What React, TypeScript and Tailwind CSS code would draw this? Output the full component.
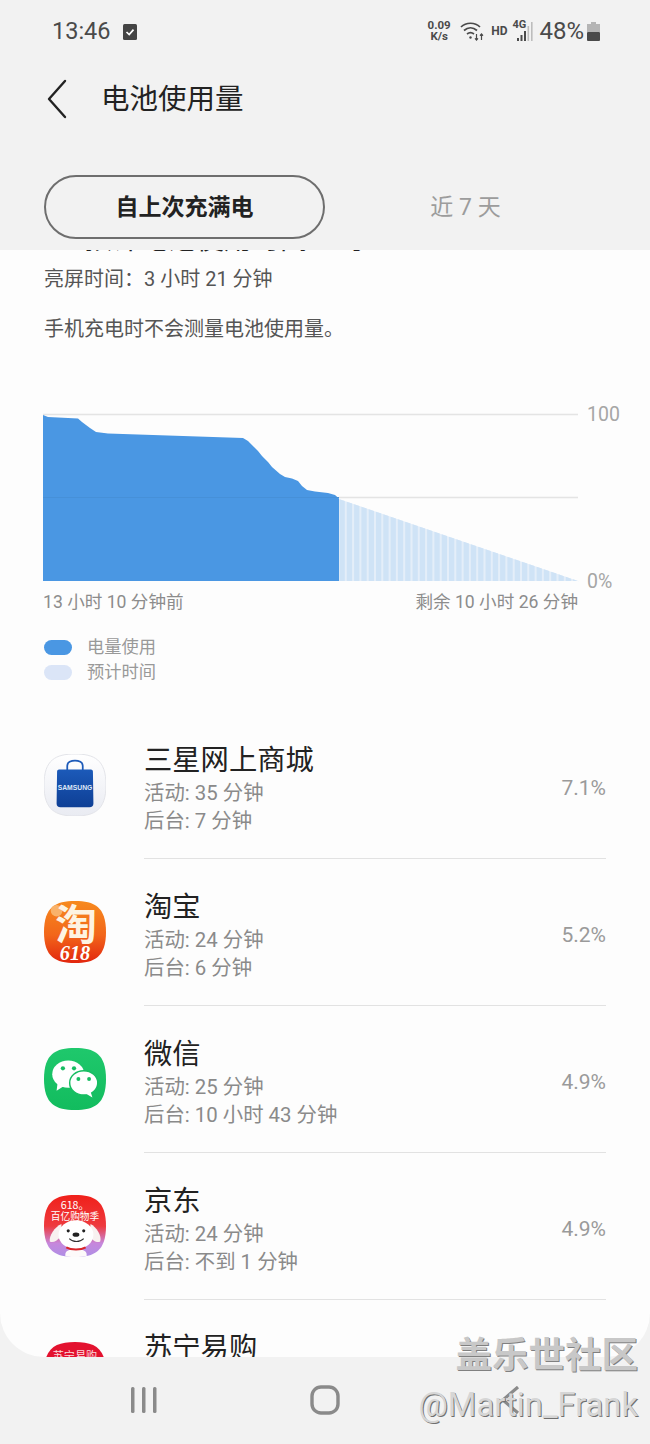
const font = 'font-["Roboto","Noto_Sans_CJK_SC",sans-serif]';
const squircle = 'M32 0C52 0 64 6 64 32 64 58 52 64 32 64 12 64 0 58 0 32 0 6 12 0 32 0Z';

const usedPoints = '43,581 43,415 48,417 78,418.5 82,422 90,428 96,432 108,433.5 243,438 248,441 254,447 258,451 262,456 268,462 272,467 280,474 285,477 292,478.5 298,481 302,486 307,490 315,491.5 328,493 335,495 339,498.5 339,581';

const apps = [
  { name: '三星网上商城', active: '活动: 35 分钟', bg: '后台: 7 分钟', pct: '7.1%', icon: 'samsung' },
  { name: '淘宝', active: '活动: 24 分钟', bg: '后台: 6 分钟', pct: '5.2%', icon: 'taobao' },
  { name: '微信', active: '活动: 25 分钟', bg: '后台: 10 小时 43 分钟', pct: '4.9%', icon: 'wechat' },
  { name: '京东', active: '活动: 24 分钟', bg: '后台: 不到 1 分钟', pct: '4.9%', icon: 'jd' },
  { name: '苏宁易购', active: '活动: 20 分钟', bg: '后台: 5 分钟', pct: '4.1%', icon: 'suning' },
];

function AppIcon({ kind }: { kind: string }) {
  return (
    <svg viewBox="0 0 64 64" className="h-[62px] w-[62px] shrink-0">
      <defs>
        <linearGradient id="sam" x1="0" y1="0" x2="0" y2="1"><stop offset="0" stopColor="#ffffff" /><stop offset="1" stopColor="#e9ebf2" /></linearGradient>
        <linearGradient id="bag" x1="0" y1="0" x2="0" y2="1"><stop offset="0" stopColor="#1c5ab9" /><stop offset="1" stopColor="#0e3f95" /></linearGradient>
        <linearGradient id="tao" x1="0" y1="0" x2="0" y2="1"><stop offset="0" stopColor="#f78a1e" /><stop offset="0.55" stopColor="#f2661a" /><stop offset="1" stopColor="#e2260e" /></linearGradient>
        <linearGradient id="wx" x1="0" y1="0" x2="0" y2="1"><stop offset="0" stopColor="#1fc86c" /><stop offset="1" stopColor="#12bc5e" /></linearGradient>
        <linearGradient id="jd" x1="0" y1="0" x2="0" y2="1"><stop offset="0" stopColor="#f0201a" /><stop offset="0.5" stopColor="#ee3a3e" /><stop offset="0.78" stopColor="#c687dc" /><stop offset="1" stopColor="#ae8fe6" /></linearGradient>
        <clipPath id={`clip-${kind}`}><path d={squircle} /></clipPath>
      </defs>
      {kind === 'samsung' && (
        <>
          <path d={squircle} fill="url(#sam)" stroke="#e2e3e8" strokeWidth="1" />
          <path d="M24 18V12C24 5 40 5 40 12V18" fill="none" stroke="#1c5ab9" strokeWidth="1.8" />
          <path d="M13.5 18C13.5 17 14.5 16 15.5 16H48.5C49.5 16 50.5 17 50.5 18L51 51C51 53.5 49.5 55 47 55H17C14.5 55 13 53.5 13 51Z" fill="url(#bag)" />
          <text x="32" y="37.5" textAnchor="middle" fontSize="7" fontWeight="700" fill="#dfe8f7" fontFamily="Liberation Sans, sans-serif">SAMSUNG</text>
        </>
      )}
      {kind === 'taobao' && (
        <>
          <path d={squircle} fill="url(#tao)" />
          <circle cx="13" cy="10" r="6" fill="#f9b26a" />
          <text x="33" y="40" textAnchor="middle" fontSize="43" fontWeight="700" fill="#fdf3e2" fontFamily="Noto Sans CJK SC, sans-serif">淘</text>
          <text x="32" y="61" textAnchor="middle" fontSize="21" fontWeight="700" fontStyle="italic" fill="#fff" fontFamily="Liberation Serif, serif">618</text>
        </>
      )}
      {kind === 'wechat' && (
        <>
          <path d={squircle} fill="url(#wx)" />
          <ellipse cx="25" cy="27" rx="16.5" ry="14" fill="#fff" />
          <path d="M14 36L13 44 21 39Z" fill="#fff" />
          <circle cx="19.5" cy="21" r="2.2" fill="#17bd62" />
          <circle cx="31" cy="21" r="2.2" fill="#17bd62" />
          <ellipse cx="41" cy="36" rx="14.5" ry="12.5" fill="#fff" stroke="#17bd62" strokeWidth="1.5" />
          <path d="M48 45L50 51 43 47Z" fill="#fff" />
          <circle cx="35.5" cy="32" r="2" fill="#17bd62" />
          <circle cx="46.5" cy="32" r="2" fill="#17bd62" />
        </>
      )}
      {kind === 'jd' && (
        <g clipPath="url(#clip-jd)">
          <rect width="64" height="64" fill="url(#jd)" />
          <text x="32" y="14" textAnchor="middle" fontSize="11" fill="#fff" fontFamily="Noto Sans CJK SC, sans-serif">618。</text>
          <text x="32" y="26" textAnchor="middle" fontSize="10" fill="#fff" fontFamily="Noto Sans CJK SC, sans-serif">百亿购物季</text>
          <path d="M18 30C11 33 5 42 6 48 9 50 14 47 18 42Z" fill="#f8f1f0" />
          <path d="M48 30C54 33 60 42 58 48 55 50 50 47 47 42Z" fill="#f8f1f0" />
          <ellipse cx="33" cy="41" rx="18" ry="15" fill="#fff" />
          <path d="M22 61C22 54 44 54 44 61V66H22Z" fill="#fdfafa" />
          <path d="M23 54C28 57 38 57 43 54" fill="none" stroke="#d8262a" strokeWidth="2" />
          <circle cx="25" cy="37" r="1.6" fill="#222" />
          <circle cx="41" cy="37" r="1.6" fill="#222" />
          <ellipse cx="33" cy="41" rx="3.5" ry="2.2" fill="#222" />
          <path d="M26 45C30 49 37 49 41 45" fill="none" stroke="#333" strokeWidth="1.2" />
        </g>
      )}
      {kind === 'suning' && (
        <>
          <path d={squircle} fill="#e3122f" />
          <text x="32" y="19" textAnchor="middle" fontSize="11.5" fill="#fbd9dd" fontFamily="Noto Sans CJK SC, sans-serif">苏宁易购</text>
        </>
      )}
    </svg>
  );
}

function BatteryChart() {
  // projected part: light bars under the line from (339,499) to (578,581)
  const bars = [];
  for (let i = 0; i < 33; i++) {
    const x = 339.5 + i * 7.3;
    const top = 499 + ((x - 339) / 239) * 82;
    bars.push(<path key={i} d={`M${x} 581V${top}L${x + 5.3} ${top + (5.3 / 239) * 82}V581Z`} fill="#cfe3f6" />);
  }
  return (
    <svg viewBox="0 404 650 185" className="block h-[185px] w-[650px]">
      <line x1="43" y1="414.5" x2="578" y2="414.5" stroke="#e4e4e4" strokeWidth="1.4" />
      <line x1="339" y1="497.5" x2="578" y2="497.5" stroke="#e4e4e4" strokeWidth="1.4" />
      <polygon points="339,499 578,581 339,581" fill="#e4eef9" />
      {bars}
      <polygon points={usedPoints} fill="#4a97e3" />
      <line x1="43" y1="497.5" x2="339" y2="497.5" stroke="#4690d8" strokeWidth="1" />
      <text x="587" y="421" fontSize="19.5" fill="#a6a6a6" fontFamily="Roboto, sans-serif">100</text>
      <text x="587" y="587.5" fontSize="19.5" fill="#a6a6a6" fontFamily="Roboto, sans-serif">0%</text>
    </svg>
  );
}

function StatusIcons() {
  return (
    <div className="flex items-center text-[#4a4a4a]">
      <div className="flex w-[24px] flex-col items-center text-[11.5px] font-bold leading-[11px]">
        <span>0.09</span>
        <span>K/s</span>
      </div>
      <svg viewBox="0 0 24 20" className="ml-[9px] h-[20px] w-[24px]" fill="none" stroke="#4a4a4a" strokeWidth="1.7">
        <path d="M1 6C6 1 15 1 20 6" />
        <path d="M4 9.5C8 6 13 6 17 9.5" />
        <path d="M7 13C9 11.5 12 11.5 14 13" />
        <circle cx="10.5" cy="16.5" r="1.2" fill="#4a4a4a" stroke="none" />
        <path d="M16.5 13V19M15 17.3L16.5 19 18 17.3M21.5 19V13M20 14.7L21.5 13 23 14.7" strokeWidth="1.2" />
      </svg>
      <span className="ml-[7px] text-[12px] font-bold">HD</span>
      <div className="relative ml-[5px] h-[22px] w-[22px]">
        <span className="absolute left-0 top-[-1px] text-[11px] font-bold leading-[12px]">4G</span>
        <svg viewBox="0 0 22 22" className="h-[22px] w-[22px]">
          <rect x="5" y="18" width="2" height="3" fill="#4a4a4a" />
          <rect x="8.5" y="15" width="2" height="6" fill="#4a4a4a" />
          <rect x="12" y="11" width="2" height="10" fill="#4a4a4a" />
          <rect x="15.5" y="6" width="1.6" height="15" fill="#bdbdbd" />
          <rect x="19" y="2" width="1.6" height="19" fill="#bdbdbd" />
        </svg>
      </div>
      <span className="ml-[5px] text-[24px] leading-none">48%</span>
      <svg viewBox="0 0 13 19" className="ml-[3px] h-[19px] w-[13px]">
        <rect x="4" y="0" width="5" height="2" fill="#b5b5b5" />
        <rect x="0" y="2" width="13" height="8" fill="#b5b5b5" />
        <rect x="0" y="10" width="13" height="9" rx="1" fill="#4a4a4a" />
      </svg>
    </div>
  );
}

export default function App() {
  return (
    <div className={`relative flex h-[1444px] w-[650px] flex-col overflow-hidden bg-[#f2f2f2] ${font}`}>
      {/* Header */}
      <div className="h-[250px] shrink-0">
        <div className="flex h-[62px] items-center justify-between pl-[52px] pr-[50px]">
          <div className="flex items-center pt-[1px] text-[#4a4a4a]">
            <span className="text-[23.5px] leading-none">13:46</span>
            <svg viewBox="0 0 14 16" className="ml-[12px] h-[16px] w-[14px]">
              <rect width="14" height="16" rx="1.5" fill="#444" />
              <path d="M3.5 8L6.2 10.6 10.5 5.6" fill="none" stroke="#fff" strokeWidth="1.7" />
            </svg>
          </div>
          <StatusIcons />
        </div>
        <div className="flex h-[74px] items-center pl-[47px]">
          <svg viewBox="0 0 20 40" className="h-[40px] w-[20px]" fill="none" stroke="#222" strokeWidth="2.4">
            <path d="M18 2L2 20 18 38" strokeLinecap="round" strokeLinejoin="round" />
          </svg>
          <h1 className="ml-[34px] pt-[3px] text-[28.5px] leading-none text-[#222]">电池使用量</h1>
        </div>
        <div className="mt-[39px] flex pl-[44px]">
          <div className="flex h-[64px] w-[281px] items-center justify-center rounded-full border-2 border-[#6e6e6e] pt-[3px] text-[23px] font-bold text-[#222]">
            自上次充满电
          </div>
          <div className="flex h-[64px] w-[281px] items-center justify-center pt-[3px] text-[23px] text-[#9c9c9c]">
            近 7 天
          </div>
        </div>
      </div>

      {/* Scrolled card */}
      <div className="min-h-0 flex-1 overflow-hidden rounded-b-[44px] bg-[#fdfdfd]">
        <div className="h-[3px] overflow-hidden pl-[84px] text-[28px] leading-[28px] text-[#222]">
          <p className="-mt-[24px] whitespace-nowrap">预计电池使用时间：约 10</p>
        </div>
        <p className="mt-[11px] pl-[44px] text-[20px] leading-[30px] text-[#555]">亮屏时间：3 小时 21 分钟</p>
        <p className="mt-[20px] pl-[44px] text-[20px] leading-[30px] text-[#555]">手机充电时不会测量电池使用量。</p>
        <div className="mt-[60px]">
          <BatteryChart />
        </div>
        <div className="flex h-[24px] w-[578px] items-center justify-between pl-[43px] pt-[3px] text-[17.6px] text-[#8c8c8c]">
          <span>13 小时 10 分钟前</span>
          <span>剩余 10 小时 26 分钟</span>
        </div>
        <div className="mt-[22px] pl-[44px] text-[17.25px] text-[#999]">
          <div className="flex h-[25px] items-center">
            <span className="h-[15px] w-[28px] rounded-full bg-[#4a97e3]" />
            <span className="ml-[15px]">电量使用</span>
          </div>
          <div className="flex h-[25px] items-center">
            <span className="h-[15px] w-[28px] rounded-full bg-[#dbe5f7]" />
            <span className="ml-[15px]">预计时间</span>
          </div>
        </div>

        {/* App list */}
        <div className="mt-[27px]">
          {apps.map(a => (
            <div key={a.name} className="flex pl-[44px] pr-[44px]">
              <div className="mt-[42px] w-[100px] shrink-0">
                <AppIcon kind={a.icon} />
              </div>
              <div className="flex h-[147px] flex-1 items-center justify-between border-b-[1.5px] border-[#e2e2e2] pt-[7px]">
                <div>
                  <p className="text-[28.3px] leading-[36px] text-[#222]">{a.name}</p>
                  <p className="text-[20.4px] leading-[28px] text-[#8a8a8a]">{a.active}</p>
                  <p className="text-[20.4px] leading-[28px] text-[#8a8a8a]">{a.bg}</p>
                </div>
                <span className="text-[21px] text-[#9a9a9a]">{a.pct}</span>
              </div>
            </div>
          ))}
        </div>
      </div>

      {/* Nav bar */}
      <div className="flex h-[87px] shrink-0 items-center pb-[2px]">
        <div className="flex w-[288px] justify-center">
          <svg viewBox="0 0 28 28" className="h-[28px] w-[28px]" fill="#8a8a8a">
            <rect x="1" y="1" width="3.5" height="26" rx="1.5" />
            <rect x="12" y="1" width="3.5" height="26" rx="1.5" />
            <rect x="23" y="1" width="3.5" height="26" rx="1.5" />
          </svg>
        </div>
        <svg viewBox="0 0 30 30" className="ml-[22px] h-[30px] w-[30px]" fill="none" stroke="#8a8a8a" strokeWidth="3.4">
          <rect x="2" y="2" width="26" height="26" rx="9" />
        </svg>
        <svg viewBox="0 0 20 28" className="ml-[160px] h-[28px] w-[20px]" fill="none" stroke="#8a8a8a" strokeWidth="3.2">
          <path d="M18 1L3 14 18 27" />
        </svg>
      </div>

      {/* Watermark */}
      <div className="absolute bottom-[20px] right-[12px] flex flex-col items-end">
        <span className="text-[36.5px] font-bold leading-[44px] text-[#c8c8c8] [text-shadow:1px_1px_0_#808080]">盖乐世社区</span>
        <span className="mt-[8px] text-[32.7px] leading-[38px] text-[#d6d6d6] [text-shadow:1px_1px_0_#707070]">@Martin_Frank</span>
      </div>
    </div>
  );
}
